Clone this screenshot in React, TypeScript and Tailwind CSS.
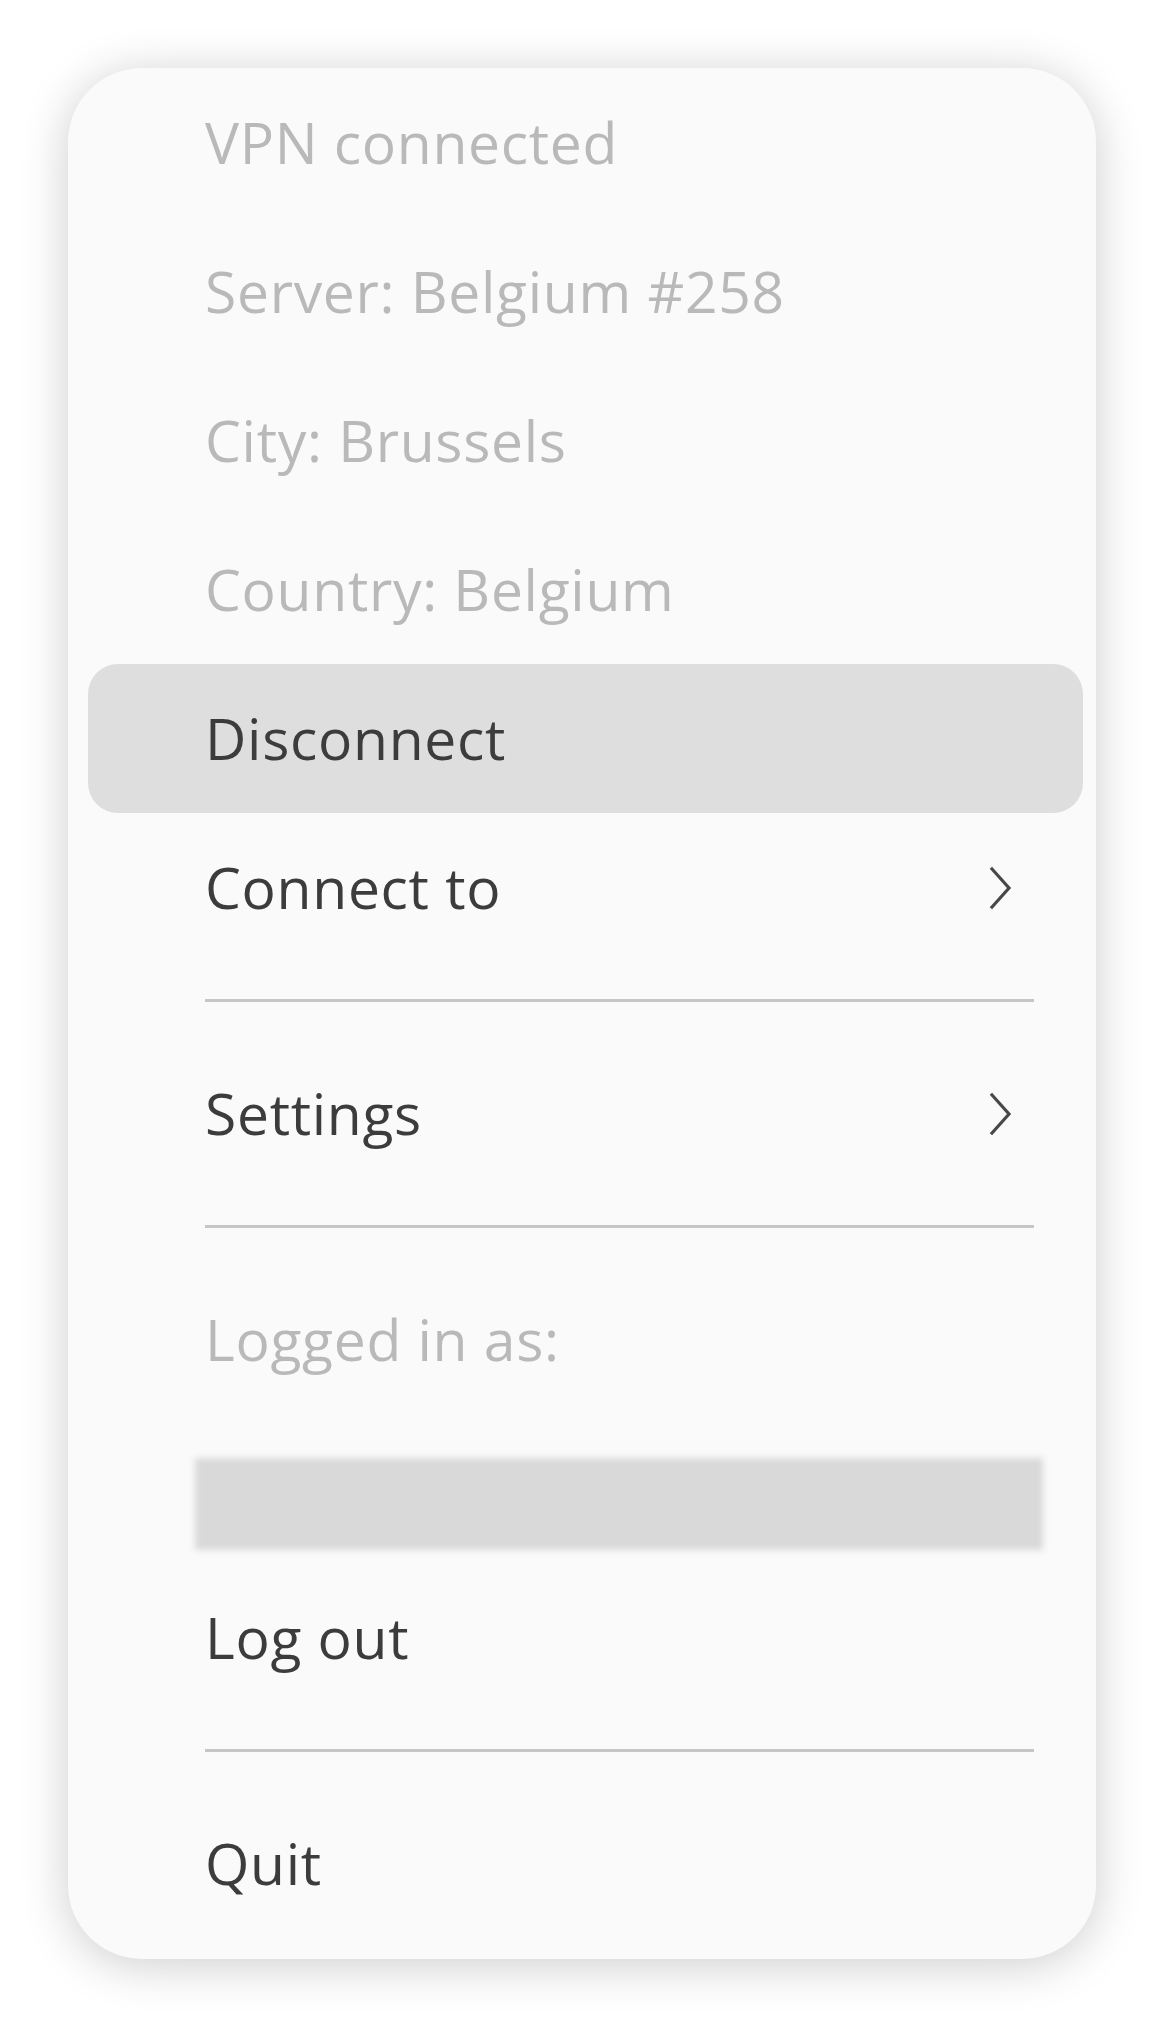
import React from "react";

type Item =
  | { kind: "label"; text: string }
  | { kind: "action"; text: string; active?: boolean; submenu?: boolean }
  | { kind: "separator" }
  | { kind: "account" };

const items: Item[] = [
  { kind: "label", text: "VPN connected" },
  { kind: "label", text: "Server: Belgium #258" },
  { kind: "label", text: "City: Brussels" },
  { kind: "label", text: "Country: Belgium" },
  { kind: "action", text: "Disconnect", active: true },
  { kind: "action", text: "Connect to", submenu: true },
  { kind: "separator" },
  { kind: "action", text: "Settings", submenu: true },
  { kind: "separator" },
  { kind: "label", text: "Logged in as:" },
  { kind: "account" },
  { kind: "action", text: "Log out" },
  { kind: "separator" },
  { kind: "action", text: "Quit" },
];

function Chevron() {
  return (
    <svg width="24" height="44" viewBox="0 0 24 44" className="shrink-0">
      <polyline
        points="3,3 20,22 3,41"
        fill="none"
        stroke="#484848"
        strokeWidth="3.2"
        strokeLinecap="square"
      />
    </svg>
  );
}

function MenuRow({ item }: { item: Item }) {
  if (item.kind === "separator") {
    return (
      <div className="pt-[37px] pb-[37px] pl-[137px] pr-[62px]">
        <div className="h-[3px] bg-[#c6c6c6]" />
      </div>
    );
  }

  if (item.kind === "account") {
    // username is blurred out in the original
    return (
      <div className="h-[149px] pl-[127px] pr-[53px] pt-[44px]">
        <div className="h-[92px] bg-[#d9d9d9] blur-[3px]" />
      </div>
    );
  }

  if (item.kind === "label") {
    return (
      <div className="h-[149px] flex items-center pl-[137px] text-[#b9b9b9]">
        {item.text}
      </div>
    );
  }

  return (
    <div
      className={`h-[149px] flex items-center justify-between ml-[20px] mr-[13px] pl-[117px] pr-[70px] rounded-[30px] text-[#3c3c3c] ${
        item.active ? "bg-[#dedede]" : ""
      }`}
    >
      <span>{item.text}</span>
      {item.submenu && <Chevron />}
    </div>
  );
}

export default function App() {
  return (
    <div className="min-h-screen bg-white pt-[68px] pl-[68px] pb-[69px]">
      <div
        className="w-[1028px] pb-[21px] bg-[#fafafa] rounded-[74px] shadow-[0_6px_48px_rgba(0,0,0,0.2)] text-[57px] leading-none tracking-[0.7px]"
        style={{ fontFamily: '"Open Sans", "Noto Sans", sans-serif' }}
      >
        {items.map((item, i) => (
          <MenuRow key={i} item={item} />
        ))}
      </div>
    </div>
  );
}
